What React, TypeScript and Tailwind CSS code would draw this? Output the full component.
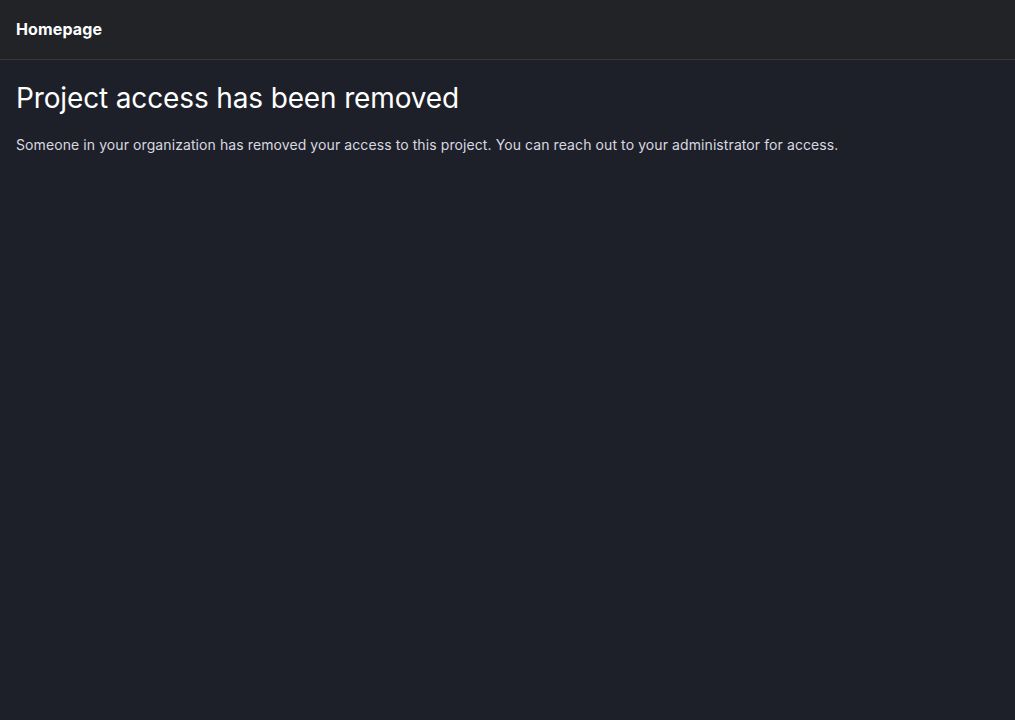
export default function App() {
  return (
    <div className="min-h-screen bg-[#1e2029] text-[#ccccdc]" style={{ fontFamily: "Inter, sans-serif" }}>
      <header className="h-[60px] bg-[#222327] border-b border-[#36383e] flex items-center px-4 pb-[2px]">
        <h1 className="text-base font-bold tracking-[0.12px] text-white">Homepage</h1>
      </header>
      <main className="px-4 pt-[20px]">
        <h2 className="text-[28px] leading-[36px] font-normal tracking-[-0.14px] text-white">Project access has been removed</h2>
        <p className="mt-[20px] text-sm leading-[18px] tracking-[0.09px] text-[#d8d9e0]">
          Someone in your organization has removed your access to this project. You can reach out to your administrator for access.
        </p>
      </main>
    </div>
  );
}
